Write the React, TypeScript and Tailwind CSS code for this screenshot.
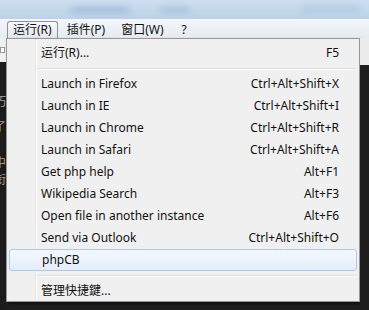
import React from 'react';

const items: { label: string; keys?: string; active?: boolean; sep?: boolean }[] = [
  { label: '运行(R)...', keys: 'F5' },
  { label: '', sep: true },
  { label: 'Launch in Firefox', keys: 'Ctrl+Alt+Shift+X' },
  { label: 'Launch in IE', keys: 'Ctrl+Alt+Shift+I' },
  { label: 'Launch in Chrome', keys: 'Ctrl+Alt+Shift+R' },
  { label: 'Launch in Safari', keys: 'Ctrl+Alt+Shift+A' },
  { label: 'Get php help', keys: 'Alt+F1' },
  { label: 'Wikipedia Search', keys: 'Alt+F3' },
  { label: 'Open file in another instance', keys: 'Alt+F6' },
  { label: 'Send via Outlook', keys: 'Ctrl+Alt+Shift+O' },
  { label: 'phpCB', active: true },
  { label: '', sep: true },
  { label: '管理快捷鍵...' },
];

const font = { fontFamily: '"Noto Sans", "Noto Sans CJK SC", sans-serif' };

function MenuRow({ label, keys, active }: { label: string; keys?: string; active?: boolean }) {
  if (active) {
    return (
      <div className="mx-[2px] flex h-[22px] items-center justify-between rounded-[3px] border border-[#a9c9ee] bg-gradient-to-b from-[#f3f8fe] to-[#e4edf9] pl-[32px] pr-[18px]">
        <span>{label}</span>
        <span>{keys}</span>
      </div>
    );
  }
  return (
    <div className="flex h-[22px] items-center justify-between pl-[34px] pr-[20px]">
      <span>{label}</span>
      <span>{keys}</span>
    </div>
  );
}

export default function App() {
  return (
    <div className="flex h-[310px] w-[369px] flex-col overflow-hidden bg-[#1e1e1e] text-[12px] text-[#111]" style={font}>
      {/* glass title bar */}
      <div className="relative h-[19px] shrink-0 overflow-hidden bg-gradient-to-b from-[#cddfef] to-[#bcd2e9]">
        <div className="absolute left-[70px] top-[7px] h-[6px] w-[60px] rounded-full bg-[#8fa9c8] opacity-60 blur-[3px]" />
        <div className="absolute left-[160px] top-[7px] h-[6px] w-[30px] rounded-full bg-[#8fa9c8] opacity-50 blur-[3px]" />
        <div className="absolute left-[300px] top-[5px] h-[8px] w-[60px] rounded-full bg-[#a9c0da] opacity-50 blur-[3px]" />
      </div>

      {/* menu bar */}
      <div className="flex h-[19px] shrink-0 items-start gap-[3px] bg-gradient-to-b from-[#f3f6fa] to-[#e6ebf1] pl-[7px] pt-[2px]">
        <div className="flex h-[17px] items-center rounded-t-[3px] border border-b-0 border-[#8e9092] bg-gradient-to-b from-[#f6f8fa] to-[#e4e8ee] px-[5px]">
          运行(R)
        </div>
        <div className="flex h-[17px] items-center px-[6px]">插件(P)</div>
        <div className="flex h-[17px] items-center px-[7px]">窗口(W)</div>
        <div className="ml-[2px] flex h-[17px] items-center px-[6px]">?</div>
      </div>

      <div className="flex flex-1">
        {/* left editor strip */}
        <div className="flex w-[6px] flex-col overflow-hidden">
          <div className="h-[24px] bg-[#f0f0f0] pt-[9px]">
            <div className="h-[6px] w-[5px] border border-[#9a9a9a] bg-white" />
          </div>
          <div className="flex flex-1 flex-col bg-[#1c1c1c] pt-[33px] leading-[14px] text-[#9a9a9a]">
            <span className="-ml-[6px] h-[25px]">巧</span>
            <span className="-ml-[6px] h-[36px]">了</span>
            <span className="-ml-[6px] h-[17px]">中</span>
            <span className="-ml-[6px] h-[14px]">衔</span>
          </div>
        </div>

        {/* dropdown */}
        <div className="h-[264px] w-[354px] border border-[#979797] bg-[#f0f0f0] bg-[linear-gradient(to_right,#f0f0f0_28px,#e2e3e3_28px,#e2e3e3_29px,#ffffff_29px,#ffffff_30px,#f0f0f0_30px)] pt-[3px] shadow-[2px_2px_3px_rgba(0,0,0,0.5)]">
          {items.map((it, i) =>
            it.sep ? (
              <div key={i} className="flex h-[9px] items-center pl-[30px] pr-[2px]">
                <div className="h-[2px] w-full border-t border-[#e0e0e0] bg-white" />
              </div>
            ) : (
              <MenuRow key={i} label={it.label} keys={it.keys} active={it.active} />
            )
          )}
        </div>

        {/* right strip */}
        <div className="flex w-[9px] flex-col">
          <div className="h-[27px] bg-[#ebebeb]" />
          <div className="flex-1 bg-[#1e1e1e]" />
        </div>
      </div>
    </div>
  );
}
